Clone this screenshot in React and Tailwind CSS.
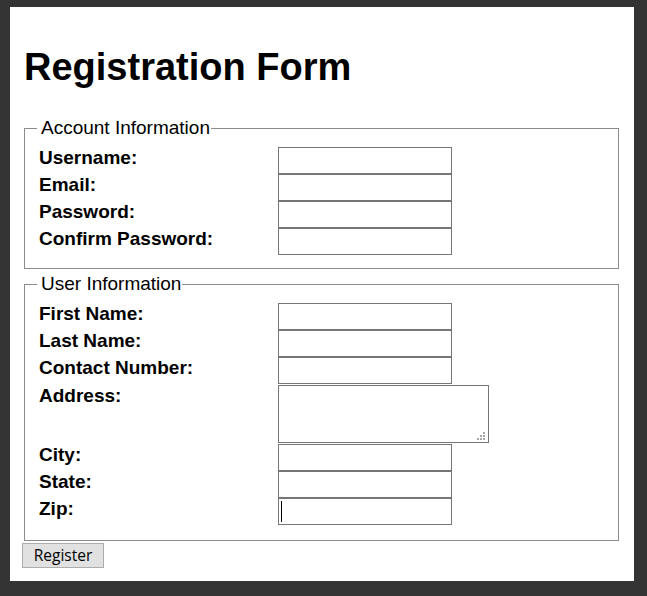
const accountFields = ["Username:", "Email:", "Password:", "Confirm Password:"];

const Row = ({ label, children, className = "" }) => (
  <div className={`flex items-start ${className}`}>
    <label className="w-[239px] shrink-0 text-[19px] font-bold leading-[normal] text-black">
      {label}
    </label>
    {children}
  </div>
);

const TextInput = ({ caret }) => (
  <div className="relative">
    <input
      type="text"
      className="block h-[27px] w-[174px] border border-[#767676] bg-white px-[2px] text-[18px] focus:outline-none"
    />
    {caret && (
      <span className="pointer-events-none absolute left-[3px] top-[3px] h-[21px] w-px bg-black" />
    )}
  </div>
);

const App = () => {
  return (
    <div
      className="min-h-[596px] bg-[#333333] pt-[7px] pl-[10px] pr-[13px] pb-[15px]"
      style={{ fontFamily: '"Liberation Sans", Arial, sans-serif' }}
    >
      <div className="h-[574px] bg-white pl-[14px] pr-[15px] pt-[38px]">
        <h1 className="text-[38px] font-bold leading-[44px] text-black">
          Registration Form
        </h1>

        {/* Account Information */}
        <fieldset className="mt-[29px] border border-[#8c8c8c] pl-[14px] pr-[14px] pt-[9px] pb-[13px]">
          <legend className="-ml-[2px] pl-[4px] pr-[1px] text-[19px] leading-[20px] text-black">
            Account Information
          </legend>
          {accountFields.map((f) => (
            <Row key={f} label={f}>
              <TextInput />
            </Row>
          ))}
        </fieldset>

        {/* User Information */}
        <fieldset className="mt-[5px] border border-[#8c8c8c] pl-[14px] pr-[14px] pt-[9px] pb-[15px]">
          <legend className="-ml-[2px] pl-[4px] pr-[1px] text-[19px] leading-[20px] text-black">
            User Information
          </legend>
          <Row label="First Name:">
            <TextInput />
          </Row>
          <Row label="Last Name:">
            <TextInput />
          </Row>
          <Row label="Contact Number:">
            <TextInput />
          </Row>
          <Row label="Address:" className="py-[1px]">
            <div className="relative">
              <textarea className="block h-[58px] w-[211px] resize-none border border-[#767676] bg-white px-[2px] text-[18px] focus:outline-none" />
              <svg
                className="pointer-events-none absolute right-[4px] bottom-[3px]"
                width="8"
                height="8"
                viewBox="0 0 8 8"
                fill="#a8a8a8"
              >
                <rect x="6" y="0" width="2" height="2" />
                <rect x="3" y="3" width="2" height="2" />
                <rect x="6" y="3" width="2" height="2" />
                <rect x="0" y="6" width="2" height="2" />
                <rect x="3" y="6" width="2" height="2" />
                <rect x="6" y="6" width="2" height="2" />
              </svg>
            </div>
          </Row>
          <Row label="City:">
            <TextInput />
          </Row>
          <Row label="State:">
            <TextInput />
          </Row>
          <Row label="Zip:">
            <TextInput caret />
          </Row>
        </fieldset>

        <button
          type="submit"
          className="-ml-[2px] mt-[2px] h-[25px] w-[82px] border border-[#adadad] bg-[#e1e1e1] text-[15.5px] leading-none text-black"
          style={{ fontFamily: '"Open Sans", "Noto Sans", sans-serif' }}
        >
          Register
        </button>
      </div>
    </div>
  );
};

export default App;
